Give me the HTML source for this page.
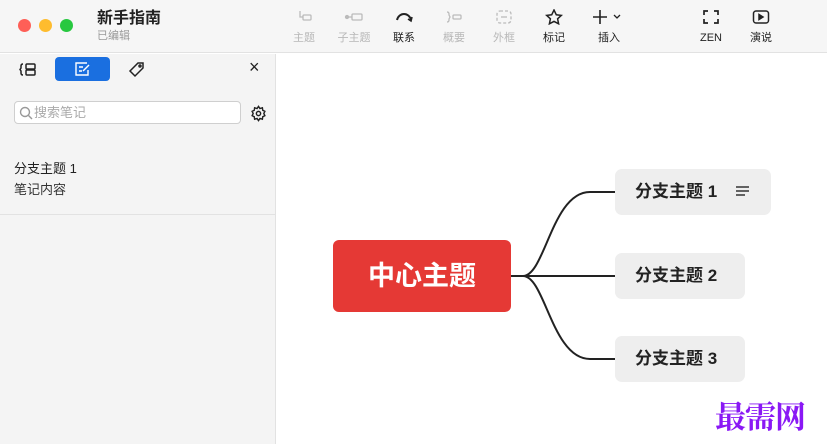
<!DOCTYPE html>
<html><head><meta charset="utf-8"><style>
*{margin:0;padding:0;box-sizing:border-box}
body{width:827px;height:444px;overflow:hidden;background:#fff;font-family:"Liberation Sans","Noto Sans CJK SC",sans-serif;position:relative;color:#222}
.top{position:absolute;left:0;top:0;width:827px;height:53px;background:#f6f6f6;border-bottom:1px solid #e2e2e2}
.dot{position:absolute;top:19px;width:13px;height:13px;border-radius:50%}
.tb{position:absolute;top:9px;text-align:center;font-size:11px;line-height:14px;width:40px;margin-left:-20px}
.tb svg{display:block;margin:0 auto 6px}
.dis{color:#b8b8b8}
.side{position:absolute;left:0;top:54px;width:276px;height:390px;background:#f4f4f4;border-right:1px solid #e2e2e2}
.node{position:absolute;background:#eeeeee;border-radius:7px;font-size:17px;font-weight:bold;color:#222;line-height:46px;padding-left:20px;height:46px}
</style></head><body>
<div class="top">
 <div class="dot" style="left:18px;background:#fe5f57"></div>
 <div class="dot" style="left:39px;background:#febc2e"></div>
 <div class="dot" style="left:60px;background:#28c840"></div>
 <div style="position:absolute;left:97px;top:9px;font-size:16px;line-height:20px;font-weight:bold;color:#222">新手指南</div>
 <div style="position:absolute;left:97px;top:29px;font-size:11px;line-height:14px;color:#999">已编辑</div>
 <div class="tb dis" style="left:304px"><svg width="18" height="16" viewBox="0 0 18 16" fill="none" stroke="#bbb" stroke-width="1.3"><path d="M5 2v6h3"/><rect x="8" y="6" width="8" height="5" rx="1"/></svg>主题</div>
 <div class="tb dis" style="left:354px"><svg width="22" height="16" viewBox="0 0 22 16" fill="none" stroke="#bbb" stroke-width="1.3"><circle cx="4" cy="8" r="1.5" fill="#bbb"/><path d="M5 8h4"/><rect x="9" y="5" width="10" height="6" rx="1"/></svg>子主题</div>
 <div class="tb" style="left:404px"><svg width="20" height="16" viewBox="0 0 20 16" fill="none" stroke="#222" stroke-width="2"><path d="M3 11C5 3 15 3 17 11"/><path d="M14 10l3 2 1-4" stroke-width="1.6"/></svg>联系</div>
 <div class="tb dis" style="left:454px"><svg width="20" height="16" viewBox="0 0 20 16" fill="none" stroke="#bbb" stroke-width="1.3"><path d="M3 3q2 0 2 2v1l1 2-1 2v1q0 2-2 2"/><rect x="9" y="6" width="8" height="4" rx="1"/></svg>概要</div>
 <div class="tb dis" style="left:504px"><svg width="18" height="16" viewBox="0 0 18 16" fill="none" stroke="#bbb" stroke-width="1.3" stroke-dasharray="3 2"><rect x="2" y="2" width="14" height="12" rx="3"/><path d="M6 8h6" stroke-dasharray="none"/></svg>外框</div>
 <div class="tb" style="left:554px"><svg width="18" height="16" viewBox="0 0 18 16" fill="none" stroke="#222" stroke-width="1.5"><path d="M9 1l2.3 4.8 5 .6-3.7 3.4 1 5L9 12.4 4.4 14.8l1-5L1.7 6.4l5-.6z"/></svg>标记</div>
 <div class="tb" style="left:609px;width:50px;margin-left:-25px"><svg width="34" height="16" viewBox="0 0 34 16" fill="none" stroke="#222" stroke-width="1.6"><path d="M8 1v14M1 8h14"/><path d="M22 6l3 3 3-3" stroke-width="1.3"/></svg>插入</div>
 <div class="tb" style="left:711px"><svg width="18" height="16" viewBox="0 0 18 16" fill="none" stroke="#222" stroke-width="1.7"><path d="M2 6V2h4M12 2h4v4M16 10v4h-4M6 14H2v-4"/></svg>ZEN</div>
 <div class="tb" style="left:761px"><svg width="18" height="16" viewBox="0 0 18 16" fill="none" stroke="#222" stroke-width="1.5"><rect x="1.5" y="2" width="15" height="12" rx="2.5"/><path d="M7 5.5v5l4-2.5z" fill="#222"/></svg>演说</div>
</div>
<div class="side">
 <svg style="position:absolute;left:19px;top:8px" width="18" height="15" viewBox="0 0 18 15" fill="none" stroke="#222" stroke-width="1.5"><path d="M4 2Q2 2 2 4v2L1 7.5 2 9v2q0 2 2 2"/><rect x="7" y="2" width="9" height="5" rx="1"/><rect x="7" y="8" width="9" height="5" rx="1"/></svg>
 <div style="position:absolute;left:55px;top:3px;width:55px;height:24px;background:#1a6fe0;border-radius:4px"><svg style="position:absolute;left:19px;top:5px" width="18" height="14" viewBox="0 0 18 14" fill="none" stroke="#fff" stroke-width="1.4"><path d="M13 1H2v12h12V8"/><path d="M5 5h4M5 9h3"/><path d="M9 9l6-6"/></svg></div>
 <svg style="position:absolute;left:128px;top:7px" width="18" height="17" viewBox="0 0 18 17" fill="none" stroke="#222" stroke-width="1.5"><path d="M10 2h5v5l-8 8-5-5z"/><circle cx="12" cy="5" r="1"/></svg>
 <div style="position:absolute;left:249px;top:3px;font-size:18px;color:#222">×</div>
 <div style="position:absolute;left:14px;top:47px;width:227px;height:23px;background:#fff;border:1px solid #cfcfcf;border-radius:4px;font-size:13px;color:#aaa;line-height:21px;padding-left:19px">搜索笔记
  <svg style="position:absolute;left:4px;top:4px" width="14" height="14" viewBox="0 0 14 14" fill="none" stroke="#999" stroke-width="1.4"><circle cx="6" cy="6" r="4.5"/><path d="M9.5 9.5L13 13"/></svg></div>
 <svg style="position:absolute;left:250px;top:51px" width="17" height="17" viewBox="0 0 24 24" fill="none" stroke="#222" stroke-width="2"><circle cx="12" cy="12" r="3"/><path d="M12 2l2 3 3.5-1 .5 3.5 3 1.5-1.5 3 1.5 3-3 1.5-.5 3.5-3.5-1-2 3-2-3-3.5 1-.5-3.5-3-1.5 1.5-3-1.5-3 3-1.5.5-3.5 3.5 1z"/></svg>
 <div style="position:absolute;left:14px;top:104px;font-size:13px;color:#222">分支主题 1</div>
 <div style="position:absolute;left:14px;top:125px;font-size:13px;color:#333">笔记内容</div>
 <div style="position:absolute;left:0;top:160px;width:276px;height:1px;background:#e2e2e2"></div>
</div>
<svg style="position:absolute;left:0;top:0" width="827" height="444" fill="none" stroke="#222" stroke-width="2">
 <path d="M510 276H523C545 276 552 192 590 192H616"/>
 <path d="M523 276H616"/>
 <path d="M523 276C545 276 552 359 590 359H616"/>
</svg>
<div style="position:absolute;left:333px;top:240px;width:178px;height:72px;background:#e53935;border-radius:6px;color:#fff;font-size:27px;font-weight:bold;text-align:center;line-height:72px">中心主题</div>
<div class="node" style="left:615px;top:169px;width:156px">分支主题 1
 <svg style="position:absolute;left:120px;top:16px" width="16" height="14" viewBox="0 0 16 14" stroke="#333" stroke-width="1.6"><path d="M1 2h13M1 6h13M1 10h9"/></svg></div>
<div class="node" style="left:615px;top:253px;width:130px">分支主题 2</div>
<div class="node" style="left:615px;top:336px;width:130px">分支主题 3</div>
<div style="position:absolute;left:715px;top:392px;font-family:'Noto Serif CJK SC',serif;font-size:31px;font-weight:bold;color:#8a18f5;letter-spacing:-1px">最需网</div>
</body></html>
